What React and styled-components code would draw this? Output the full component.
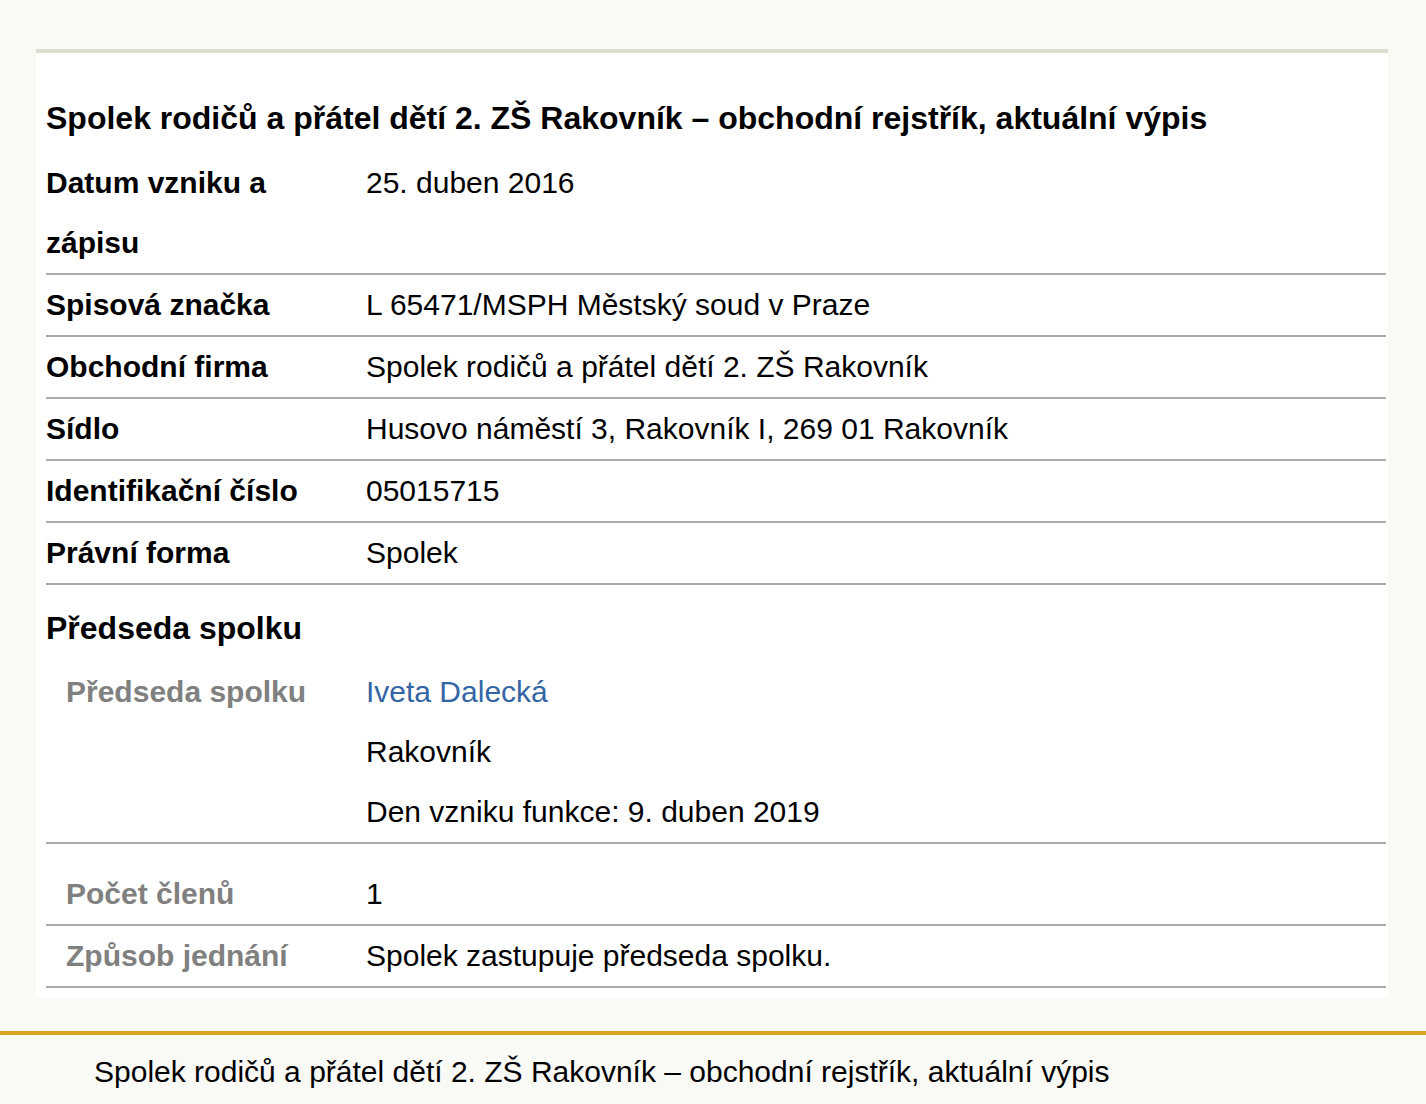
import styled, { createGlobalStyle } from "styled-components";

const Global = createGlobalStyle`
  html, body {
    margin: 0;
    padding: 0;
    background: #f9f9f5;
    font-family: "Liberation Sans", Arial, sans-serif;
    color: #000;
  }
`;

const Panel = styled.div`
  margin: 49px 0 0 36px;
  width: 1352px;
  box-sizing: border-box;
  background: #fff;
  border-top: 4px solid #dcdccf;
  padding: 35px 2px 10px 10px;
`;

const Title = styled.h1`
  margin: 0 0 5px;
  font-size: 32px;
  line-height: 60px;
  font-weight: bold;
`;

const Row = styled.div`
  display: flex;
  border-bottom: 2px solid #aaa;
  padding-top: ${(p) => p.$top || 0}px;
  font-size: 30px;
  line-height: 60px;
`;

const Label = styled.div`
  width: 320px;
  flex: none;
  box-sizing: border-box;
  padding-right: 20px;
  padding-left: ${(p) => (p.$sub ? 20 : 0)}px;
  font-weight: bold;
  color: ${(p) => (p.$sub ? "#808080" : "#000")};
`;

const Value = styled.div`
  flex: 1;
`;

const Section = styled.h2`
  margin: 13px 0 4px;
  font-size: 32px;
  line-height: 60px;
  font-weight: bold;
`;

const Link = styled.a`
  color: #3465a4;
  text-decoration: none;
  display: block;
`;

const Line = styled.div``;

const Footer = styled.footer`
  margin-top: 33px;
  border-top: 4px solid #d9a424;
  padding: 17px 0 0 94px;
  font-size: 30px;
  line-height: 40px;
`;

const rows = [
  ["Datum vzniku a zápisu", "25. duben 2016"],
  ["Spisová značka", "L 65471/MSPH Městský soud v Praze"],
  ["Obchodní firma", "Spolek rodičů a přátel dětí 2. ZŠ Rakovník"],
  ["Sídlo", "Husovo náměstí 3, Rakovník I, 269 01 Rakovník"],
  ["Identifikační číslo", "05015715"],
  ["Právní forma", "Spolek"],
];

const TITLE =
  "Spolek rodičů a přátel dětí 2. ZŠ Rakovník – obchodní rejstřík, aktuální výpis";

export default function App() {
  return (
    <>
      <Global />
      <Panel>
        <Title>{TITLE}</Title>
        {rows.map(([l, v]) => (
          <Row key={l}>
            <Label>{l}</Label>
            <Value>{v}</Value>
          </Row>
        ))}
        <Section>Předseda spolku</Section>
        <Row>
          <Label $sub>Předseda spolku</Label>
          <Value>
            <Link href="#">Iveta Dalecká</Link>
            <Line>Rakovník</Line>
            <Line>Den vzniku funkce: 9. duben 2019</Line>
          </Value>
        </Row>
        <Row $top={20}>
          <Label $sub>Počet členů</Label>
          <Value>1</Value>
        </Row>
        <Row>
          <Label $sub>Způsob jednání</Label>
          <Value>Spolek zastupuje předseda spolku.</Value>
        </Row>
      </Panel>
      <Footer>{TITLE}</Footer>
    </>
  );
}
